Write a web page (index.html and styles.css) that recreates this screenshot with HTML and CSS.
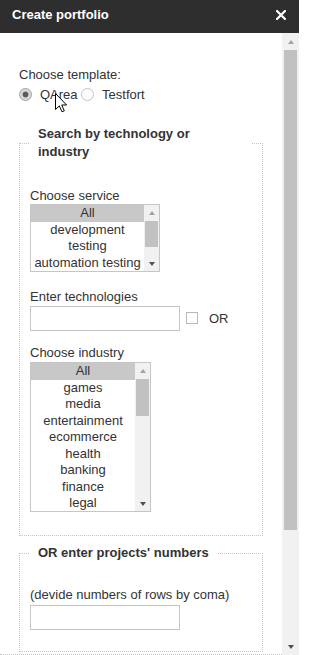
FILE: index.html
```html
<!DOCTYPE html>
<html>
<head>
<meta charset="utf-8">
<title>Create portfolio</title>
<link rel="stylesheet" href="styles.css">
</head>
<body>
<div class="header">
  <span class="title">Create portfolio</span>
  <svg class="close" width="10" height="10" viewBox="0 0 10 10"><path d="M1 1 L9 9 M9 1 L1 9" stroke="#fff" stroke-width="2.2" stroke-linecap="square"/></svg>
</div>
<div class="viewport">
  <div class="content">
    <div class="label">Choose template:</div>
    <div class="radios">
      <label class="radio-opt"><input class="radio" type="radio" name="tpl" checked><span>QArea</span></label>
      <label class="radio-opt"><input class="radio" type="radio" name="tpl"><span>Testfort</span></label>
    </div>
    <fieldset class="fs fs-search">
      <legend class="lg lg-wide"><span class="lg-text">Search by technology or industry</span></legend>
      <div class="label lbl-service">Choose service</div>
      <div class="listbox lb-service">
        <div class="options">
          <div class="opt sel">All</div>
          <div class="opt">development</div>
          <div class="opt">testing</div>
          <div class="opt">automation testing</div>
        </div>
        <div class="lb-scroll">
          <div class="sb-btn"><span class="tri-up"></span></div>
          <div class="sb-track"><div class="thumb thumb-service"></div></div>
          <div class="sb-btn"><span class="tri-down"></span></div>
        </div>
      </div>
      <div class="label lbl-tech">Enter technologies</div>
      <div class="tech-row">
        <input class="text-input" type="text">
        <input class="checkbox" type="checkbox">
        <span class="or">OR</span>
      </div>
      <div class="label lbl-industry">Choose industry</div>
      <div class="listbox lb-industry">
        <div class="options">
          <div class="opt sel">All</div>
          <div class="opt">games</div>
          <div class="opt">media</div>
          <div class="opt">entertainment</div>
          <div class="opt">ecommerce</div>
          <div class="opt">health</div>
          <div class="opt">banking</div>
          <div class="opt">finance</div>
          <div class="opt">legal</div>
        </div>
        <div class="lb-scroll">
          <div class="sb-btn"><span class="tri-up"></span></div>
          <div class="sb-track"><div class="thumb thumb-industry"></div></div>
          <div class="sb-btn"><span class="tri-down"></span></div>
        </div>
      </div>
    </fieldset>
    <fieldset class="fs fs-numbers">
      <legend class="lg">OR enter projects' numbers</legend>
      <div class="label lbl-numbers">(devide numbers of rows by coma)</div>
      <input class="text-input numbers-input" type="text">
    </fieldset>
    <div class="page-end"></div>
  </div>
  <div class="scrollbar">
    <div class="psb-btn"><span class="ptri-up"></span></div>
    <div class="psb-track"><div class="psb-thumb"></div></div>
    <div class="psb-btn"><span class="ptri-down"></span></div>
  </div>
</div>
<svg class="cursor" width="13" height="20" viewBox="0 0 13 20"><path d="M0.5 0.5 L0.5 16.5 L4.3 12.9 L7 18.8 L9.3 17.8 L6.7 12 L11.6 12 Z" fill="#fff" stroke="#000" stroke-width="1" stroke-linejoin="miter"/></svg>
</body>
</html>
```
FILE: styles.css
```css
body {
  margin: 0;
  width: 299px;
  height: 655px;
  overflow: hidden;
  position: relative;
  background: #fff;
  font-family: "Liberation Sans", Arial, sans-serif;
  font-size: 13px;
  line-height: 15px;
  color: #333;
}

.header {
  height: 33px;
  box-sizing: border-box;
  background: #2e2e2e;
  display: flex;
  justify-content: space-between;
  align-items: flex-start;
  padding: 0 13px 0 12px;
}

.title {
  color: #fff;
  font-weight: bold;
  line-height: 30px;
}

.close {
  margin-top: 10px;
  display: block;
}

.viewport {
  display: flex;
  height: 622px;
}

.content {
  width: 282px;
  flex: none;
  box-sizing: border-box;
  padding: 34px 19px 0;
  overflow: hidden;
}

.label {
  line-height: 15px;
  white-space: nowrap;
}

.radios {
  display: flex;
  align-items: center;
  height: 15px;
  margin-top: 5px;
}

.radio-opt {
  display: flex;
  align-items: center;
  gap: 8px;
  margin-right: 3.5px;
}

input.radio {
  appearance: none;
  -webkit-appearance: none;
  margin: 0;
  width: 13px;
  height: 13px;
  box-sizing: border-box;
  border-radius: 50%;
  border: 1px solid #c4c4c4;
  background: #fdfdfd;
}

input.radio:checked {
  border-color: #a0a0a0;
  background: radial-gradient(circle at center, #5c5c5c 0 2.6px, #d9d9d9 3.3px);
}

fieldset.fs {
  margin: 0;
  min-width: 0;
  border: 1px dotted #c4c4c4;
  padding: 0 10px;
}

fieldset.fs-search {
  margin-top: 23px;
  padding-bottom: 23px;
}

fieldset.fs-numbers {
  margin-top: 8px;
  padding-bottom: 21px;
}

legend.lg {
  padding: 0 8px;
  font-weight: bold;
  line-height: 18px;
  color: #333;
}

legend.lg-wide {
  width: 100%;
  box-sizing: border-box;
}

.lg-text {
  display: block;
  width: 170px;
}

.lbl-service { margin-top: 27px; }
.lbl-tech { margin-top: 17px; }
.lbl-industry { margin-top: 14px; }
.lbl-numbers { margin-top: 25px; }

.listbox {
  display: flex;
  box-sizing: border-box;
  border: 1px solid #c6c6c6;
  background: #fff;
  overflow: hidden;
}

.lb-service {
  width: 130px;
  height: 68px;
  margin-top: 1px;
}

.lb-industry {
  width: 121px;
  height: 150px;
  margin-top: 2px;
}

.options {
  flex: 1;
  min-width: 0;
  overflow: hidden;
}

.opt {
  height: 16.5px;
  line-height: 15px;
  text-align: center;
  white-space: nowrap;
}

.opt.sel {
  background: #c8c8c8;
}

.lb-scroll {
  width: 15px;
  flex: none;
  display: flex;
  flex-direction: column;
  background: #f1f1f1;
}

.sb-btn {
  height: 15px;
  flex: none;
  display: flex;
  align-items: center;
  justify-content: center;
}

.sb-track {
  flex: 1;
  padding: 1px 1px 0;
}

.thumb {
  background: #c1c1c1;
}

.thumb-service { height: 26px; }
.thumb-industry { height: 37px; }

.tri-up {
  width: 0;
  height: 0;
  border-left: 3.5px solid transparent;
  border-right: 3.5px solid transparent;
  border-bottom: 4px solid #a3a3a3;
}

.tri-down {
  width: 0;
  height: 0;
  border-left: 3.5px solid transparent;
  border-right: 3.5px solid transparent;
  border-top: 4px solid #505050;
}

.tech-row {
  display: flex;
  align-items: center;
  height: 25px;
  margin-top: 2px;
}

.text-input {
  width: 150px;
  height: 25px;
  box-sizing: border-box;
  margin: 0;
  padding: 0 3px;
  border: 1px solid #c6c6c6;
  background: #fff;
  font: inherit;
  outline: none;
}

.numbers-input {
  display: block;
  margin-top: 3px;
}

input.checkbox {
  appearance: none;
  -webkit-appearance: none;
  margin: 0 0 1px 6px;
  width: 12px;
  height: 12px;
  box-sizing: border-box;
  border: 1px solid #b8b8b8;
  background: #fff;
}

.or {
  margin-left: 11px;
}

.page-end {
  margin: 2px -19px 0;
  border-top: 1px dotted #c4c4c4;
}

.scrollbar {
  width: 17px;
  flex: none;
  display: flex;
  flex-direction: column;
  background: #f1f1f1;
}

.psb-btn {
  height: 17px;
  flex: none;
  display: flex;
  align-items: center;
  justify-content: center;
}

.psb-track {
  flex: 1;
  padding: 0 2px;
}

.psb-thumb {
  height: 480px;
  background: #c1c1c1;
}

.ptri-up {
  width: 0;
  height: 0;
  border-left: 3.5px solid transparent;
  border-right: 3.5px solid transparent;
  border-bottom: 4px solid #a3a3a3;
}

.ptri-down {
  width: 0;
  height: 0;
  border-left: 3.5px solid transparent;
  border-right: 3.5px solid transparent;
  border-top: 4px solid #505050;
}

.cursor {
  position: absolute;
  left: 55px;
  top: 93px;
}
```
